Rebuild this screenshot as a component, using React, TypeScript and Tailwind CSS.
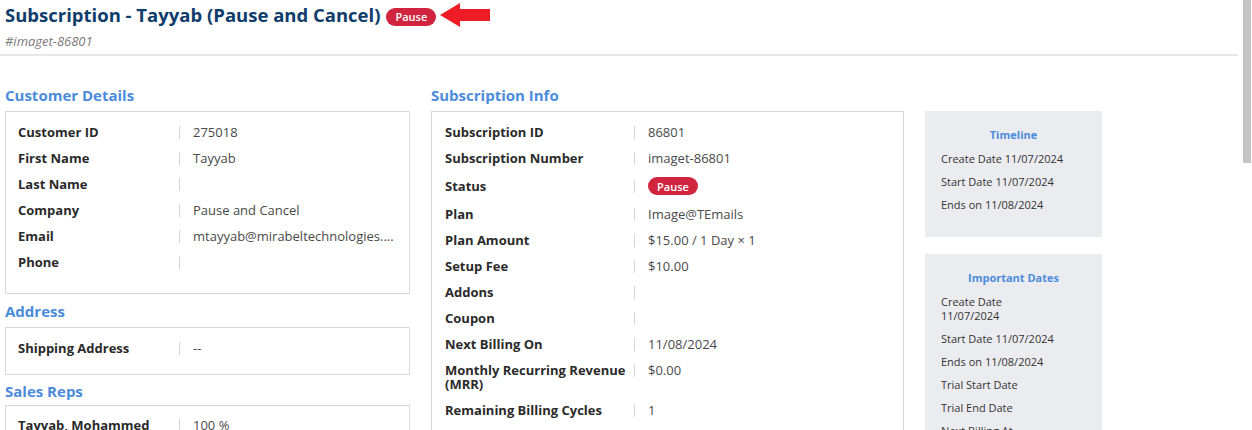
import React from "react";

type Row = { label: string; value?: React.ReactNode; center?: boolean };

const customerRows: Row[] = [
  { label: "Customer ID", value: "275018" },
  { label: "First Name", value: "Tayyab" },
  { label: "Last Name" },
  { label: "Company", value: "Pause and Cancel" },
  { label: "Email", value: "mtayyab@mirabeltechnologies...." },
  { label: "Phone" },
];

const PauseBadge = () => (
  <span className="inline-flex h-[18px] items-center rounded-full bg-[#d1253f] px-[9px] text-[11px] font-semibold leading-none text-white">
    Pause
  </span>
);

const subscriptionRows: Row[] = [
  { label: "Subscription ID", value: "86801" },
  { label: "Subscription Number", value: "imaget-86801" },
  { label: "Status", value: <PauseBadge />, center: true },
  { label: "Plan", value: "Image@TEmails" },
  { label: "Plan Amount", value: "$15.00 / 1 Day × 1" },
  { label: "Setup Fee", value: "$10.00" },
  { label: "Addons" },
  { label: "Coupon" },
  { label: "Next Billing On", value: "11/08/2024" },
  { label: "Monthly Recurring Revenue (MRR)", value: "$0.00" },
  { label: "Remaining Billing Cycles", value: "1" },
];

const SectionTitle = ({ children, className = "" }: { children: React.ReactNode; className?: string }) => (
  <h2 className={`flex h-[20px] items-center text-[15px] font-bold text-[#4b8bdc] ${className}`}>{children}</h2>
);

const DetailRow = ({ label, value, center, labelWidth }: Row & { labelWidth: string }) => (
  <div className={`flex py-[6px] text-[13px] leading-[14px] ${center ? "items-center" : "items-start"}`}>
    <div className={`${labelWidth} shrink-0 pr-[8px] font-bold text-[#2a2a2a]`}>{label}</div>
    <div className="flex min-h-[14px] items-center">
      <span className="h-[13px] w-px bg-[#d4d4d4]" />
    </div>
    <div className="ml-[13px] flex min-h-[14px] items-center text-[#4a4a4a]">{value}</div>
  </div>
);

const LeftArrow = () => (
  <svg width="50" height="24" viewBox="0 0 50 24" className="ml-[4px]">
    <polygon points="0,12 20,0 20,6 50,6 50,18 20,18 20,24" fill="#ee1c25" />
  </svg>
);

const DateCard = ({ title, items }: { title: string; items: React.ReactNode[] }) => (
  <div className="bg-[#ebecf0] px-[16px] pb-[21px] pt-[17px] text-[11px] leading-[14px] text-[#333]">
    <div className="mb-[5px] text-center font-bold text-[#4b8bdc]">{title}</div>
    {items.map((item, i) => (
      <div key={i} className="py-[4.5px]">
        {item}
      </div>
    ))}
  </div>
);

export default function App() {
  return (
    <div className="flex h-[430px] w-[1252px] overflow-hidden bg-white font-['Open_Sans',sans-serif]">
      <div className="flex-1">
        {/* header */}
        <div className="border-b-2 border-[#e6e6e6] px-[5px] pb-[4px] pt-[3px]">
          <div className="flex items-center">
            <h1 className="text-[18.5px] font-bold leading-[24px] text-[#0e3c6b]">
              Subscription - Tayyab (Pause and Cancel)
            </h1>
            <span className="ml-[6px]">
              <PauseBadge />
            </span>
            <LeftArrow />
          </div>
          <div className="mt-[5px] text-[13px] italic leading-[18px] text-[#7a7a7a]">#imaget-86801</div>
        </div>

        <div className="flex gap-[21px] pl-[5px] pt-[29px]">
          {/* left column */}
          <div className="w-[405px]">
            <SectionTitle className="mb-[6px]">Customer Details</SectionTitle>
            <div className="border border-[#d8d8d8] px-[12px] pb-[18px] pt-[7px]">
              {customerRows.map((r) => (
                <DetailRow key={r.label} {...r} labelWidth="w-[161px]" />
              ))}
            </div>

            <SectionTitle className="mb-[6px] mt-[7px]">Address</SectionTitle>
            <div className="border border-[#d8d8d8] px-[12px] pb-[13px] pt-[7px]">
              <DetailRow label="Shipping Address" value="--" labelWidth="w-[161px]" />
            </div>

            <SectionTitle className="mb-[4px] mt-[6px]">Sales Reps</SectionTitle>
            <div className="border border-[#d8d8d8] px-[12px] pb-[13px] pt-[6px]">
              <DetailRow label="Tayyab, Mohammed" value="100 %" labelWidth="w-[161px]" />
            </div>
          </div>

          {/* middle column */}
          <div className="w-[473px]">
            <SectionTitle className="mb-[6px]">Subscription Info</SectionTitle>
            <div className="border border-[#d8d8d8] px-[13px] pb-[18px] pt-[7px]">
              {subscriptionRows.map((r) => (
                <DetailRow key={r.label} {...r} labelWidth="w-[189px]" />
              ))}
            </div>
          </div>

          {/* right column */}
          <div className="flex w-[177px] flex-col gap-[17px] pt-[26px]">
            <DateCard
              title="Timeline"
              items={["Create Date 11/07/2024", "Start Date 11/07/2024", "Ends on 11/08/2024"]}
            />
            <DateCard
              title="Important Dates"
              items={[
                <>
                  Create Date
                  <br />
                  11/07/2024
                </>,
                "Start Date 11/07/2024",
                "Ends on 11/08/2024",
                "Trial Start Date",
                "Trial End Date",
                "Next Billing At",
              ]}
            />
          </div>
        </div>
      </div>

      {/* scrollbar */}
      <div className="flex w-[14px] shrink-0 justify-end pr-px">
        <div className="h-[163px] w-[8px] bg-[#c4c4c4]" />
      </div>
    </div>
  );
}
